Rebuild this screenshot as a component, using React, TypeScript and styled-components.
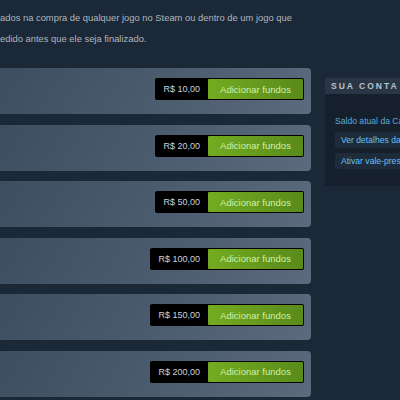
import styled, { createGlobalStyle } from 'styled-components';

const GlobalStyle = createGlobalStyle`
  html, body {
    margin: 0;
    padding: 0;
    overflow: hidden;
    background: #1b2838;
  }
  body {
    font-family: "Liberation Sans", Arial, sans-serif;
  }
`;

const Page = styled.div`
  display: flex;
  align-items: flex-start;
  width: 400px;
  height: 400px;
  overflow: hidden;
`;

const MainColumn = styled.div`
  flex: 0 0 321px;
  margin-left: -10px;
`;

const Intro = styled.div`
  padding: 6.5px 0 0 10px;
  font-size: 9.4px;
  line-height: 21px;
  color: #b0b6bc;
  white-space: nowrap;
`;

const PanelList = styled.div`
  display: flex;
  flex-direction: column;
  gap: 10.6px;
  margin-top: 19.5px;
`;

const Panel = styled.div`
  height: 46px;
  box-sizing: border-box;
  padding: 10px 7px 0 0;
  display: flex;
  justify-content: flex-end;
  align-items: flex-start;
  border-radius: 4px;
  background: linear-gradient(-60deg, #5b6a7d 0%, #4b5b6e 50%, #3d4d60 100%);
`;

const PurchaseAction = styled.div`
  display: flex;
  height: 22px;
  background: #000;
  border-radius: 2px;
  padding: 1px 1px 1px 0;
  box-sizing: border-box;
`;

const Price = styled.div`
  display: flex;
  align-items: center;
  padding: 0 8px;
  font-size: 9px;
  color: #c6d4df;
`;

const GreenButton = styled.div`
  width: 95px;
  display: flex;
  align-items: center;
  justify-content: center;
  border-radius: 1px;
  background: linear-gradient(to right, #72aa20 5%, #5a8c1b 95%);
  color: #d2efa9;
  font-size: 9.5px;
`;

const Sidebar = styled.div`
  flex: 0 0 250px;
  margin: 78px 0 0 14px;
`;

const SidebarHeader = styled.div`
  height: 16px;
  display: flex;
  align-items: center;
  padding-left: 6px;
  background: #2a3645;
  color: #b7c2cc;
  font-size: 8.5px;
  font-weight: bold;
  letter-spacing: 2px;
  text-transform: uppercase;
  white-space: nowrap;
`;

const SidebarBody = styled.div`
  height: 92px;
  box-sizing: border-box;
  background: #16202d;
  padding: 22px 0 0 10px;
  display: flex;
  flex-direction: column;
  align-items: flex-start;
`;

const Balance = styled.div`
  font-size: 8.6px;
  color: #5aa9dc;
  white-space: nowrap;
  margin-bottom: 6px;
`;

const LinkButton = styled.div`
  height: 16px;
  display: flex;
  align-items: center;
  padding: 0 6px;
  margin-bottom: 5px;
  background: #1e2b3b;
  border-radius: 2px;
  color: #67c1f5;
  font-size: 8.6px;
  white-space: nowrap;
`;

const amounts = ['10,00', '20,00', '50,00', '100,00', '150,00', '200,00'];

export default function App() {
  return (
    <>
      <GlobalStyle />
      <Page>
        <MainColumn>
          <Intro>
            <div>ados na compra de qualquer jogo no Steam ou dentro de um jogo que</div>
            <div>edido antes que ele seja finalizado.</div>
          </Intro>
          <PanelList>
            {amounts.map((a) => (
              <Panel key={a}>
                <PurchaseAction>
                  <Price>R$ {a}</Price>
                  <GreenButton>Adicionar fundos</GreenButton>
                </PurchaseAction>
              </Panel>
            ))}
          </PanelList>
        </MainColumn>
        <Sidebar>
          <SidebarHeader>Sua conta Steam</SidebarHeader>
          <SidebarBody>
            <Balance>Saldo atual da Carteira Steam</Balance>
            <LinkButton>Ver detalhes da minha conta</LinkButton>
            <LinkButton>Ativar vale-presente ou código</LinkButton>
          </SidebarBody>
        </Sidebar>
      </Page>
    </>
  );
}
